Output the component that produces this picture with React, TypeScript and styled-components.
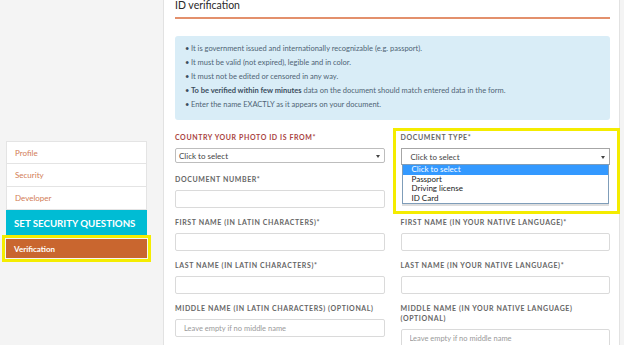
import React from 'react';
import styled, { createGlobalStyle } from 'styled-components';

const GlobalStyle = createGlobalStyle`
  body {
    margin: 0;
    background: #f4f4f4;
    font-family: Lato, "Open Sans", sans-serif;
  }
`;

const Page = styled.div`
  display: flex;
  height: 345px;
  overflow: hidden;
`;

const Sidebar = styled.nav`
  width: 163px;
  flex-shrink: 0;
  box-sizing: border-box;
  padding: 141px 0 0 6px;
`;

const Menu = styled.div`
  width: 141px;
  display: flex;
  flex-direction: column;
`;

const MenuItem = styled.div<{ $variant?: 'plain' | 'featured' | 'active'; $h?: number }>`
  display: flex;
  align-items: center;
  box-sizing: border-box;
  padding-left: 8px;
  height: ${(p) => p.$h || 23}px;
  font-size: 8px;
  color: #d27d55;
  background: white;
  border: 1px solid #e4e4e4;
  border-top: none;
  white-space: nowrap;

  &:first-child {
    border-top: 1px solid #e4e4e4;
  }

  ${(p) =>
    p.$variant === 'featured' &&
    `
    background: #00bcd4;
    border: none;
    color: white;
    font-size: 9.7px;
    font-weight: bold;
    margin-bottom: 4px;
  `}

  ${(p) =>
    p.$variant === 'active' &&
    `
    background: #c9662f;
    border: none;
    color: white;
    font-weight: bold;
    outline: 3px solid #f4ec00;
    outline-offset: 1px;
  `}
`;

const Panel = styled.main`
  width: 457px;
  flex-shrink: 0;
  box-sizing: border-box;
  background: white;
  border-left: 1px solid #e2e2e2;
  border-right: 1px solid #e2e2e2;
  padding: 0 9px 0 11px;
`;

const Title = styled.h2`
  margin: -2px 0 0;
  font-size: 10.5px;
  font-weight: normal;
  line-height: 14px;
  color: #2a2a2a;
  padding-bottom: 5px;
  border-bottom: 2px solid #e3906c;
`;

const InfoBox = styled.ul`
  margin: 17px 0 0;
  list-style: none;
  background: #d9edf7;
  border-radius: 3px;
  padding: 6px 10px 8px 10px;

  li {
    display: flex;
    font-size: 7.5px;
    line-height: 14px;
    color: #4f6475;
  }

  li::before {
    content: '•';
    width: 6px;
    color: #3b4e5e;
  }

  b {
    color: #3b4e5e;
    margin-right: 2px;
  }
`;

const FormGrid = styled.div`
  display: grid;
  grid-template-columns: 1fr 1fr;
  column-gap: 16px;
  row-gap: 9px;
  align-items: start;
  margin-top: 12px;
`;

const Field = styled.div<{ $highlight?: boolean }>`
  position: relative;
  display: flex;
  flex-direction: column;

  ${(p) =>
    p.$highlight &&
    `
    &::after {
      content: '';
      position: absolute;
      top: -4px;
      left: -8px;
      width: 227px;
      height: 86px;
      box-sizing: border-box;
      border: 3px solid #f4ec00;
      pointer-events: none;
    }
  `}
`;

const Label = styled.label<{ $error?: boolean }>`
  font-size: 7px;
  font-weight: bold;
  letter-spacing: 0.6px;
  line-height: 10px;
  margin-bottom: 6px;
  white-space: nowrap;
  color: ${(p) => (p.$error ? '#a9443f' : '#666')};
`;

const Input = styled.input`
  height: 18px;
  box-sizing: border-box;
  border: 1px solid #dadada;
  border-radius: 2px;
  padding: 0 8px;
  font-family: inherit;
  font-size: 7.5px;
  color: #444;

  &::placeholder {
    color: #9a9a9a;
  }
`;

const SelectBox = styled.div<{ $open?: boolean }>`
  position: relative;
  display: flex;
  align-items: center;
  box-sizing: border-box;
  height: ${(p) => (p.$open ? 17 : 15)}px;
  padding-left: ${(p) => (p.$open ? 9 : 3)}px;
  border: 1px solid ${(p) => (p.$open ? '#a6a6a6' : '#bdbdbd')};
  border-radius: ${(p) => (p.$open ? 0 : 2)}px;
  font-size: 8px;
  color: #444;
  background: white;

  &::after {
    content: '';
    position: absolute;
    right: 4px;
    top: 50%;
    margin-top: -1px;
    border-left: 2px solid transparent;
    border-right: 2px solid transparent;
    border-top: 3px solid #444;
  }
`;

const OptionList = styled.ul`
  position: absolute;
  top: 100%;
  left: 0;
  right: 0;
  margin: 0;
  padding: 0;
  list-style: none;
  background: white;
  border: 1px solid #7f9db9;
  box-shadow: 0 2px 0 #dedede;
  z-index: 2;
`;

const Option = styled.li<{ $selected?: boolean }>`
  font-size: 8px;
  line-height: 9.5px;
  padding-left: 9px;
  color: ${(p) => (p.$selected ? 'white' : '#222')};
  background: ${(p) => (p.$selected ? '#3399ff' : 'transparent')};
`;

const Empty = styled.div``;

const documentTypes = ['Click to select', 'Passport', 'Driving license', 'ID Card'];

export default function App() {
  return (
    <>
      <GlobalStyle />
      <Page>
        <Sidebar>
          <Menu>
            <MenuItem $h={23}>Profile</MenuItem>
            <MenuItem>Security</MenuItem>
            <MenuItem>Developer</MenuItem>
            <MenuItem $variant="featured" $h={25}>
              SET SECURITY QUESTIONS
            </MenuItem>
            <MenuItem $variant="active" $h={19}>
              Verification
            </MenuItem>
          </Menu>
        </Sidebar>
        <Panel>
          <Title>ID verification</Title>
          <InfoBox>
            <li>It is government issued and internationally recognizable (e.g. passport).</li>
            <li>It must be valid (not expired), legible and in color.</li>
            <li>It must not be edited or censored in any way.</li>
            <li>
              <span>
                <b>To be verified within few minutes</b>data on the document should match entered data in the form.
              </span>
            </li>
            <li>Enter the name EXACTLY as it appears on your document.</li>
          </InfoBox>
          <FormGrid>
            <Field>
              <Label $error>COUNTRY YOUR PHOTO ID IS FROM*</Label>
              <SelectBox>Click to select</SelectBox>
            </Field>
            <Field $highlight>
              <Label>DOCUMENT TYPE*</Label>
              <SelectBox $open>
                Click to select
                <OptionList>
                  {documentTypes.map((t, i) => (
                    <Option key={t} $selected={i === 0}>
                      {t}
                    </Option>
                  ))}
                </OptionList>
              </SelectBox>
            </Field>

            <Field>
              <Label>DOCUMENT NUMBER*</Label>
              <Input />
            </Field>
            <Empty />

            <Field>
              <Label>FIRST NAME (IN LATIN CHARACTERS)*</Label>
              <Input />
            </Field>
            <Field>
              <Label>FIRST NAME (IN YOUR NATIVE LANGUAGE)*</Label>
              <Input />
            </Field>

            <Field>
              <Label>LAST NAME (IN LATIN CHARACTERS)*</Label>
              <Input />
            </Field>
            <Field>
              <Label>LAST NAME (IN YOUR NATIVE LANGUAGE)*</Label>
              <Input />
            </Field>

            <Field>
              <Label>MIDDLE NAME (IN LATIN CHARACTERS) (OPTIONAL)</Label>
              <Input placeholder="Leave empty if no middle name" />
            </Field>
            <Field>
              <Label>
                MIDDLE NAME (IN YOUR NATIVE LANGUAGE)
                <br />
                (OPTIONAL)
              </Label>
              <Input placeholder="Leave empty if no middle name" />
            </Field>
          </FormGrid>
        </Panel>
      </Page>
    </>
  );
}
